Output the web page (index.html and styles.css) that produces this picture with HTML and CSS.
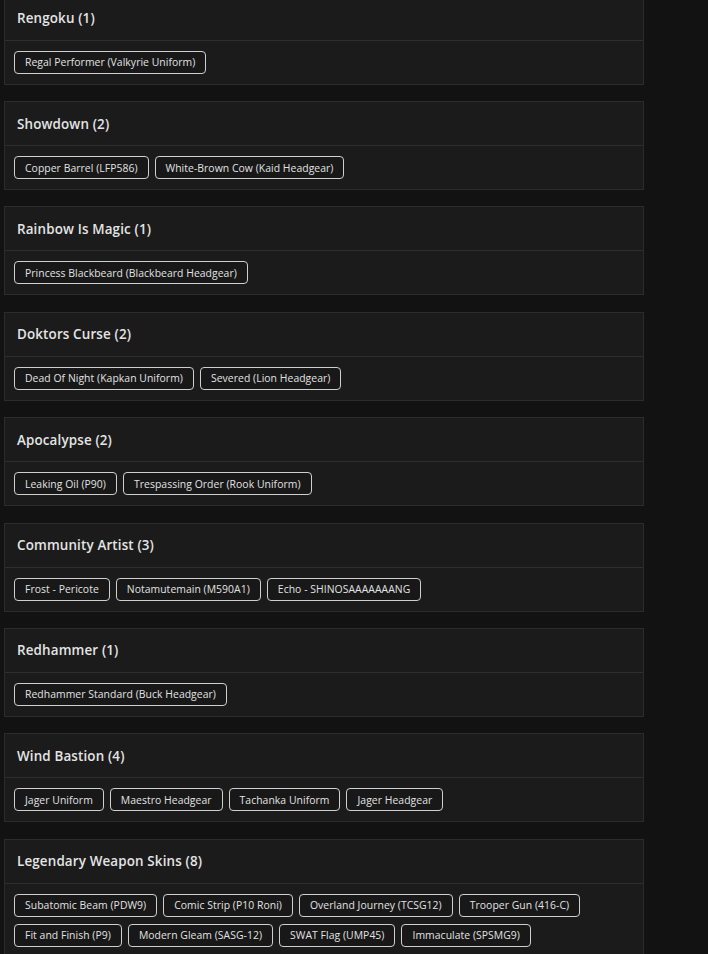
FILE: index.html
```html
<!DOCTYPE html>
<html>
<head>
<meta charset="utf-8">
<link rel="stylesheet" href="styles.css">
</head>
<body>
<div class="list">
  <section class="card">
    <div class="card-head">Rengoku (1)</div>
    <div class="card-body">
      <span class="chip">Regal Performer (Valkyrie Uniform)</span>
    </div>
  </section>
  <section class="card">
    <div class="card-head">Showdown (2)</div>
    <div class="card-body">
      <span class="chip">Copper Barrel (LFP586)</span>
      <span class="chip">White-Brown Cow (Kaid Headgear)</span>
    </div>
  </section>
  <section class="card">
    <div class="card-head">Rainbow Is Magic (1)</div>
    <div class="card-body">
      <span class="chip">Princess Blackbeard (Blackbeard Headgear)</span>
    </div>
  </section>
  <section class="card">
    <div class="card-head">Doktors Curse (2)</div>
    <div class="card-body">
      <span class="chip">Dead Of Night (Kapkan Uniform)</span>
      <span class="chip">Severed (Lion Headgear)</span>
    </div>
  </section>
  <section class="card">
    <div class="card-head">Apocalypse (2)</div>
    <div class="card-body">
      <span class="chip">Leaking Oil (P90)</span>
      <span class="chip">Trespassing Order (Rook Uniform)</span>
    </div>
  </section>
  <section class="card">
    <div class="card-head">Community Artist (3)</div>
    <div class="card-body">
      <span class="chip">Frost - Pericote</span>
      <span class="chip">Notamutemain (M590A1)</span>
      <span class="chip">Echo - SHINOSAAAAAAANG</span>
    </div>
  </section>
  <section class="card">
    <div class="card-head">Redhammer (1)</div>
    <div class="card-body">
      <span class="chip">Redhammer Standard (Buck Headgear)</span>
    </div>
  </section>
  <section class="card">
    <div class="card-head">Wind Bastion (4)</div>
    <div class="card-body">
      <span class="chip">Jager Uniform</span>
      <span class="chip">Maestro Headgear</span>
      <span class="chip">Tachanka Uniform</span>
      <span class="chip">Jager Headgear</span>
    </div>
  </section>
  <section class="card">
    <div class="card-head">Legendary Weapon Skins (8)</div>
    <div class="card-body">
      <span class="chip">Subatomic Beam (PDW9)</span>
      <span class="chip">Comic Strip (P10 Roni)</span>
      <span class="chip">Overland Journey (TCSG12)</span>
      <span class="chip">Trooper Gun (416-C)</span>
      <span class="chip">Fit and Finish (P9)</span>
      <span class="chip">Modern Gleam (SASG-12)</span>
      <span class="chip">SWAT Flag (UMP45)</span>
      <span class="chip">Immaculate (SPSMG9)</span>
    </div>
  </section>
</div>
</body>
</html>
```

FILE: styles.css
```css
html, body {
  margin: 0;
  padding: 0;
  background: #121212;
  overflow: hidden;
}
body {
  font-family: "Open Sans", "Noto Sans", sans-serif;
  color: #e6e6e6;
}
.list {
  display: flex;
  flex-direction: column;
  gap: 16.4px;
  width: 640px;
  margin: -4.4px 0 0 4px;
}
.card {
  background: #1b1b1b;
  border: 1px solid #2c2c2c;
}
.card-head {
  height: 43px;
  display: flex;
  align-items: center;
  padding-left: 12px;
  font-size: 13.4px;
  font-weight: 600;
  letter-spacing: 0.15px;
  color: #e4e4e4;
  border-bottom: 1px solid #2e2e2e;
}
.card-body {
  display: flex;
  flex-wrap: wrap;
  gap: 7px 6px;
  padding: 10px 9px;
}
.chip {
  box-sizing: border-box;
  height: 23px;
  display: inline-flex;
  align-items: center;
  padding: 0 10px;
  border: 1px solid #cfcfcf;
  border-radius: 4px;
  font-size: 10.4px;
  letter-spacing: 0.05px;
  color: #e2e2e2;
  background: #181818;
}
```
